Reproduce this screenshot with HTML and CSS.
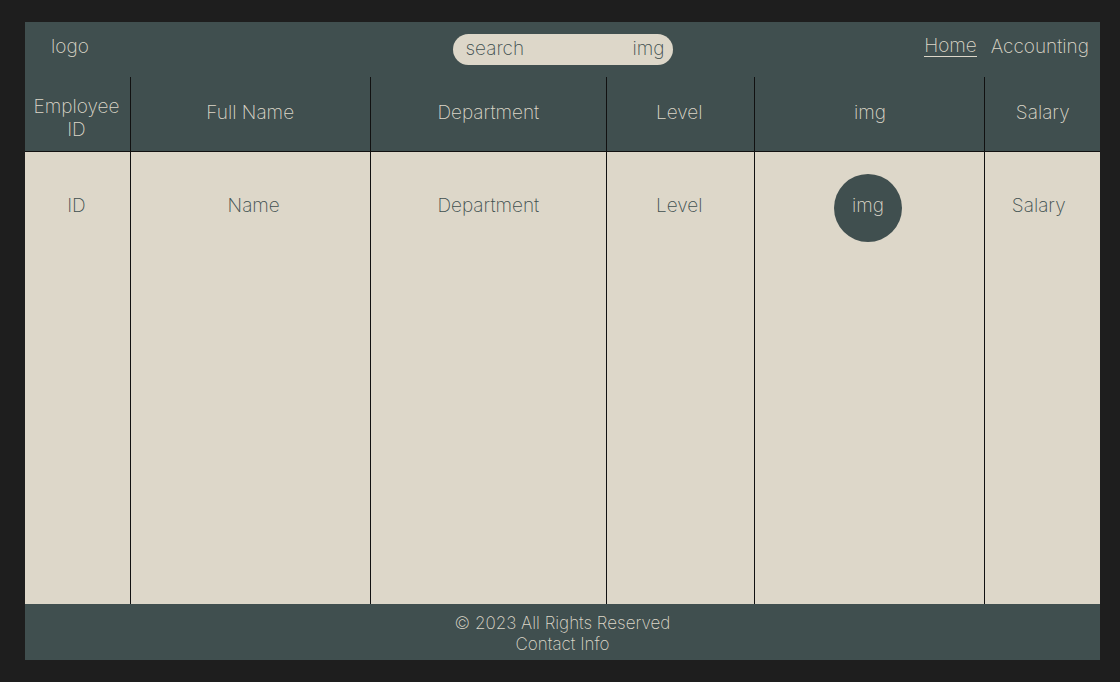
FILE: index.html
```html
<!DOCTYPE html>
<html lang="en">
<head>
<meta charset="utf-8">
<title>Employees</title>
<link rel="stylesheet" href="styles.css">
</head>
<body>
<div class="page">
  <header class="topbar">
    <div class="brand">logo</div>
    <form class="search" role="search">
      <input class="search-input" type="text" placeholder="search" aria-label="Search">
      <button class="search-button" type="button">img</button>
    </form>
    <nav class="nav">
      <a class="nav-link active" href="#home">Home</a>
      <a class="nav-link" href="#accounting">Accounting</a>
    </nav>
  </header>
  <main class="content">
    <table class="staff">
      <colgroup>
        <col class="col-id"><col class="col-name"><col class="col-dept"><col class="col-level"><col class="col-img"><col class="col-salary">
      </colgroup>
      <thead>
        <tr><th class="id">Employee ID</th><th>Full Name</th><th>Department</th><th class="level">Level</th><th>img</th><th>Salary</th></tr>
      </thead>
      <tbody>
        <tr><td>ID</td><td class="name">Name</td><td>Department</td><td class="level">Level</td><td class="photo"><span class="avatar">img</span></td><td class="salary">Salary</td></tr>
      </tbody>
    </table>
  </main>
  <footer class="footer">
    <div>© 2023 All Rights Reserved</div>
    <div>Contact Info</div>
  </footer>
</div>
</body>
</html>
```
FILE: styles.css
```css
* { box-sizing: border-box; }
:root { --slate: #404f4f; --sand: #ddd7c9; --line: #111; }
body {
  margin: 0;
  background: #1e1e1e;
  color: var(--sand);
  font: 200 19px/23px Inter, sans-serif;
}
.page {
  display: flex;
  flex-direction: column;
  min-height: 100vh;
  padding: 22px 20px 22px 25px;
}
.topbar {
  display: grid;
  grid-template-columns: 1fr 220px 1fr;
  align-items: center;
  height: 55px;
  background: var(--slate);
}
.brand { padding-left: 26px; padding-bottom: 6px; }
.search {
  display: flex;
  justify-content: space-between;
  height: 31px;
  padding: 0 8px 2px 13px;
  border-radius: 16px;
  background: var(--sand);
}
.search-input, .search-button {
  padding: 0;
  border: 0;
  background: none;
  color: var(--slate);
  font: inherit;
}
.search-input { width: 120px; }
.search-input::placeholder { color: var(--slate); opacity: 1; }
.nav {
  display: flex;
  justify-content: flex-end;
  gap: 14px;
  padding: 0 11px 6px 0;
}
.nav-link { color: inherit; text-decoration: none; }
.nav-link.active {
  height: 22px;
  line-height: 21px;
  border-bottom: 1px solid var(--sand);
}
.content { display: flex; flex: 1; background: var(--sand); }
.staff {
  width: 100%;
  table-layout: fixed;
  border-collapse: collapse;
}
.col-id { width: 9.8%; }
.col-name { width: 22.3%; }
.col-dept { width: 22%; }
.col-level { width: 13.8%; }
.col-img { width: 21.4%; }
.staff th {
  height: 74px;
  padding: 0 6px 3px;
  border-bottom: 1px solid var(--line);
  background: var(--slate);
  font-weight: inherit;
}
.staff .id { padding: 9px 8px 0 6px; }
.staff td {
  padding: 42px 6px 0;
  color: var(--slate);
  text-align: center;
  vertical-align: top;
}
.staff td:first-child { padding-right: 8px; }
.staff th + th, .staff td + td { border-left: 1px solid var(--line); }
.staff .level { padding-right: 9px; }
.staff .name { padding-left: 13px; }
.staff .photo { padding: 22px 8px 0 4px; }
.staff .salary { padding-right: 14px; }
.avatar {
  display: inline-block;
  width: 68px;
  height: 68px;
  border-radius: 50%;
  background: var(--slate);
  color: var(--sand);
  line-height: 63px;
}
.footer {
  height: 56px;
  padding-top: 9px;
  background: var(--slate);
  font-size: 17px;
  line-height: 21px;
  text-align: center;
}
```
